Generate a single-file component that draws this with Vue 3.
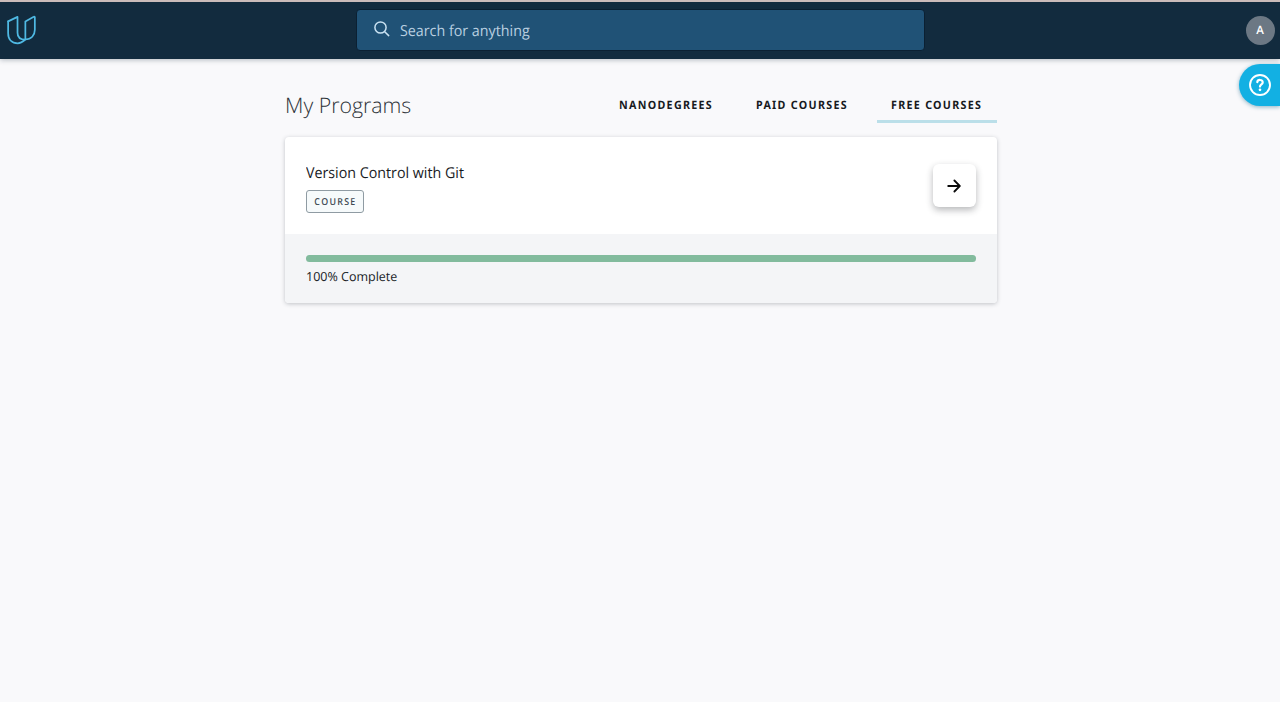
<script setup>
const tabs = [
  { label: 'NANODEGREES', name: 'nano', active: false },
  { label: 'PAID COURSES', name: 'paid', active: false },
  { label: 'FREE COURSES', name: 'free', active: true },
]
const progress = 100
</script>

<template>
  <div class="page">
    <header class="topbar">
      <svg class="logo" width="30" height="31" viewBox="0 0 31 31" fill="none" stroke="#4fb9e3" stroke-width="1.8" stroke-linejoin="round" stroke-linecap="round">
        <path d="M2.2 6.1 11.9 1.4V17.7C11.9 22.4 15 24.8 20 24.8" />
        <path d="M2.2 6.1V18.3C2.2 25 6.3 28.7 12.1 28.7C14.9 28.7 17.1 27.3 20 24.8C26 24.8 29.8 20.6 29.8 14.8V2C29.8 1.4 29.2 1.1 28.7 1.4L20 6.1V24.8" />
      </svg>
      <div class="search">
        <svg width="16" height="16" viewBox="0 0 16 16" fill="none" stroke="#c9e2f2" stroke-width="1.5" stroke-linecap="round">
          <circle cx="6.5" cy="6.5" r="5.6" />
          <path d="m10.7 10.7 4 3.9" />
        </svg>
        <span>Search for anything</span>
      </div>
      <div class="avatar">A</div>
      <button class="help" aria-label="Help">
        <svg width="24" height="24" viewBox="0 0 24 24" fill="none" stroke="#fff" stroke-linecap="round">
          <circle cx="12" cy="12" r="10" stroke-width="1.9" />
          <path d="M9.3 9.2C9.6 6.2 14.7 6.2 14.7 9.4C14.7 11.5 12 11.4 12 13.6" stroke-width="2.2" />
          <circle cx="12" cy="16.8" r="1.35" fill="#fff" stroke="none" />
        </svg>
      </button>
    </header>

    <main class="content">
      <div class="heading">
        <h1>My Programs</h1>
        <nav>
          <a v-for="tab in tabs" :key="tab.label" :class="[tab.name, { active: tab.active }]"><span>{{ tab.label }}</span></a>
        </nav>
      </div>
      <section class="card">
        <div class="course">
          <div>
            <h2>Version Control with Git</h2>
            <div class="tag"><span>COURSE</span></div>
          </div>
          <button class="go" aria-label="Open course">
            <svg width="14" height="14" viewBox="0 0 14 14" fill="none" stroke="#0b0b0b" stroke-width="1.8" stroke-linecap="round" stroke-linejoin="round">
              <path d="M1.2 7H12.6M7.4 1.5 12.8 7 7.4 12.5" />
            </svg>
          </button>
        </div>
        <div class="status">
          <div class="track"><div class="fill" :style="{ width: progress + '%' }"></div></div>
          <p>{{ progress }}% Complete</p>
        </div>
      </section>
    </main>
  </div>
</template>

<style>
body {
  margin: 0;
  background: #f9f9fb;
}
</style>

<style scoped>
* {
  box-sizing: border-box;
}
.page {
  height: 702px;
  overflow: hidden;
  background: #f9f9fb;
  font-family: "Open Sans", "Noto Sans", sans-serif;
  text-rendering: geometricPrecision;
  color: #171a1e;
}
.topbar {
  position: relative;
  display: flex;
  align-items: center;
  justify-content: space-between;
  height: 59px;
  padding: 0 5px 0 6px;
  border-top: 2px solid #cbbcba;
  background: #122b3e;
  box-shadow: 0 1px 5px rgba(20, 40, 55, 0.3);
}
.logo {
  display: block;
}
.search {
  display: flex;
  align-items: center;
  width: 569px;
  height: 42px;
  margin-top: -1px;
  margin-left: -1px;
  padding: 1px 17px 0 17px;
  border: 1px solid #0b2032;
  border-radius: 4px;
  background: #205276;
  color: #b9cfe0;
  font-size: 15.2px;
  line-height: 20px;
}
.search svg {
  margin: -4px 10px 0 0;
}
.search span {
  transform: scaleX(0.94);
  transform-origin: left;
}
.avatar {
  width: 29px;
  height: 29px;
  border-radius: 50%;
  background: #6c7884;
  color: #fff;
  font-size: 11.5px;
  font-weight: 600;
  line-height: 29px;
  text-align: center;
  text-indent: -1px;
}
button {
  border: 0;
  font: inherit;
}
.help {
  position: absolute;
  top: 62px;
  right: 0;
  display: flex;
  align-items: center;
  width: 41px;
  height: 42px;
  padding: 0 0 0 9px;
  border-radius: 21px 0 0 21px;
  background: #12b0e3;
  box-shadow: 0 1px 4px rgba(2, 90, 130, 0.45);
}
.help svg {
  display: block;
}
.content {
  width: 712px;
  margin-left: 285px;
  padding-top: 29px;
}
.heading {
  display: flex;
  justify-content: space-between;
  height: 49px;
}
h1 {
  margin: 0;
  color: #2d3238;
  font-size: 21.3px;
  font-weight: 300;
  line-height: 35px;
}
nav {
  display: flex;
  gap: 14px;
}
nav a {
  height: 35px;
  padding-left: 14px;
  border-bottom: 3px solid #0000;
  font-family: "Noto Sans", "Open Sans", sans-serif;
  font-size: 11.5px;
  font-weight: 700;
  line-height: 35px;
  letter-spacing: 1.4px;
  white-space: nowrap;
}
nav span {
  display: block;
  transform: scaleX(0.93);
  transform-origin: left;
}
.nano {
  width: 123px;
}
.paid {
  width: 121px;
}
.free {
  width: 120px;
}
nav .active {
  border-color: #bbdfe9;
}
.card {
  overflow: hidden;
  border-radius: 4px;
  background: #fff;
  box-shadow: 0 1px 4px rgba(30, 40, 50, 0.26);
}
.course {
  display: flex;
  justify-content: space-between;
  height: 97px;
  padding: 27px 21px 0;
}
h2 {
  margin: -2px 0 5px;
  font-size: 15px;
  font-weight: 400;
  line-height: 23px;
  transform: scaleX(0.95);
  transform-origin: left;
}
.tag {
  width: 58px;
  height: 23px;
  border: 1px solid #8f9ba3;
  border-radius: 3px;
  background: #f6fafb;
  color: #414b54;
  font-size: 9.6px;
  font-weight: 600;
  line-height: 21px;
  letter-spacing: 1.4px;
  text-indent: 1px;
  text-align: center;
}
.tag span {
  display: block;
  transform: scaleX(0.92);
}
.go {
  display: flex;
  align-items: center;
  justify-content: center;
  width: 43px;
  height: 43px;
  padding: 0 1px 0 0;
  border-radius: 6px;
  background: #fff;
  box-shadow: 0 3px 7px rgba(30, 35, 40, 0.32);
}
.status {
  height: 69px;
  padding: 21px 21px 0;
  background: #f4f5f7;
}
.track {
  height: 7px;
  border-radius: 4px;
  background: #dfe5e8;
}
.fill {
  height: 100%;
  border-radius: 4px;
  background: #82bb9d;
}
p {
  margin: 4px 0 0;
  font-size: 12.5px;
  line-height: 21px;
}
</style>
